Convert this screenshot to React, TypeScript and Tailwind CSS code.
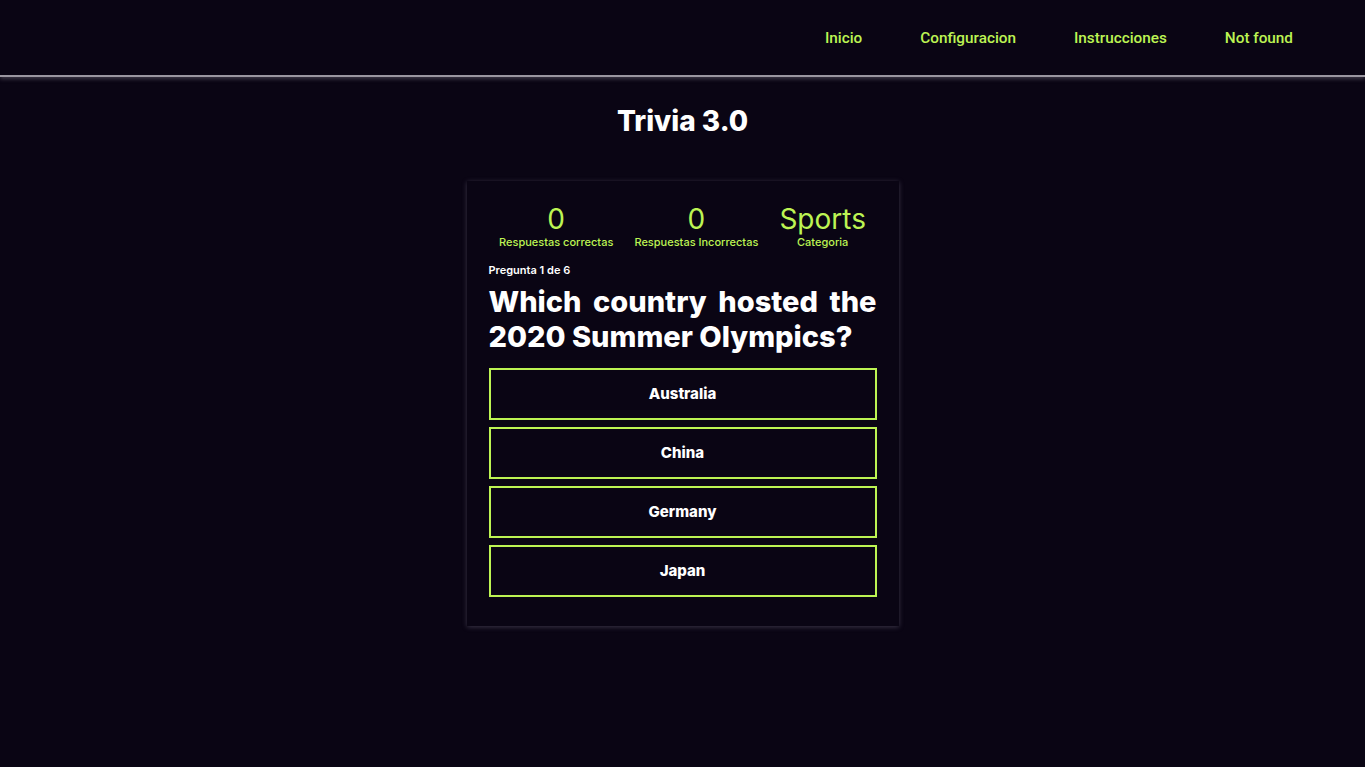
const answers = ["Australia", "China", "Germany", "Japan"];

const Stat = ({ value, label }: { value: string; label: string }) => (
  <div className="flex flex-col items-center">
    <p className="text-[28px] leading-[31px] font-normal text-[#bdf453]">{value}</p>
    <p className="text-[11px] leading-[14px] font-medium text-[#bdf453]">{label}</p>
  </div>
);

const App = () => {
  return (
    <div
      className="min-h-screen w-full bg-[#0a0514] text-white"
      style={{ fontFamily: "Inter, 'Noto Sans', sans-serif" }}
    >
      <nav className="flex h-[77px] items-center justify-end gap-[58px] pr-[72px] border-b-2 border-[#9a96a0] shadow-[0_2px_4px_rgba(160,155,170,0.35)]">
        {["Inicio", "Configuracion", "Instrucciones", "Not found"].map((l) => (
          <a
            key={l}
            className="pt-[2px] text-[15.3px] font-medium text-[#bdf453] cursor-pointer"
            style={{ fontFamily: "Roboto, 'Liberation Sans', sans-serif" }}
          >
            {l}
          </a>
        ))}
      </nav>

      <h1 className="mt-[26px] text-center text-[28px] leading-[36px] font-extrabold">Trivia 3.0</h1>

      <div className="flex justify-center mt-[42px]">
        <div className="w-[432px] px-[22px] pt-[23px] pb-[29px] bg-[#0a0514] shadow-[0_1px_5px_rgba(150,140,165,0.35)]">
          <div className="flex justify-around">
            <Stat value="0" label="Respuestas correctas" />
            <Stat value="0" label="Respuestas Incorrectas" />
            <Stat value="Sports" label="Categoria" />
          </div>

          <p className="mt-[14px] text-[11px] leading-[14px] font-semibold">Pregunta 1 de 6</p>
          <h2 className="mt-[7px] text-[29px] leading-[35px] font-extrabold text-justify">
            Which country hosted the 2020 Summer Olympics?
          </h2>

          <div className="mt-[14px] flex flex-col gap-[7px]">
            {answers.map((a) => (
              <button
                key={a}
                className="h-[52px] w-full border-2 border-[#bdf453] bg-transparent text-[15px] font-extrabold text-white"
              >
                {a}
              </button>
            ))}
          </div>
        </div>
      </div>
    </div>
  );
};

export default App;
